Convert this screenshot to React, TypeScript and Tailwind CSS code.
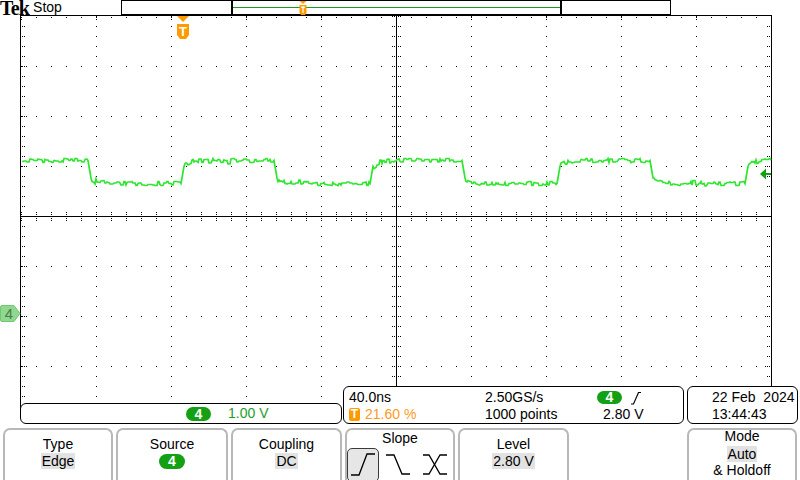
import React from "react";

function dotsPath(): string {
  const parts: string[] = [];
  const dot = (x: number, y: number) => parts.push(`M${x} ${y}h1v1h-1z`);
  const xs = Array.from({ length: 11 }, (_, i) => 21 + 75 * i);
  const ys = [66, 116, 166, 216, 266, 316, 366, 416];
  for (const y of ys) {
    if (y === 216) continue;
    for (let x = 21; x <= 771; x += 15) dot(x, y);
  }
  for (const x of xs) {
    if (x === 396 || x === 21 || x === 771) continue;
    for (let y = 16; y <= 416; y += 10) dot(x, y);
  }
  for (let x = 21; x <= 771; x += 15) {
    dot(x, 17);
    if ((x - 21) % 75 === 0) dot(x, 19);
  }
  for (let y = 26; y <= 416; y += 10) {
    dot(22, y);
    dot(24, y);
    dot(769, y);
    dot(767, y);
    if ((y - 16) % 50 === 0) {
      dot(26, y);
      dot(765, y);
    }
  }
  for (let x = 21; x <= 771; x += 15) {
    dot(x, 212);
    dot(x, 214);
    dot(x, 218);
    dot(x, 220);
  }
  for (let y = 16; y <= 416; y += 10) {
    dot(392, y);
    dot(394, y);
    dot(398, y);
    dot(400, y);
  }
  return parts.join("");
}

function wavePoints(): string {
  let s = 987654;
  const rnd = () => {
    s = (s * 16807) % 2147483647;
    return s / 2147483647;
  };
  const edges: [number, "r" | "f"][] = [
    [88, "f"],
    [181, "r"],
    [274, "f"],
    [370, "r"],
    [462, "f"],
    [557, "r"],
    [650, "f"],
    [745, "r"],
  ];
  const HIGH = 160.5;
  const LOW = 183.5;
  const pts: string[] = [];
  let noise = 0;
  let hold = 0;
  for (let x = 22; x <= 771; x++) {
    let last: [number, "r" | "f"] | null = null;
    for (const e of edges) if (e[0] <= x) last = e;
    let y = HIGH;
    let trans = false;
    if (last) {
      const d = x - last[0];
      const from = last[1] === "r" ? LOW : HIGH;
      const to = last[1] === "r" ? HIGH : LOW;
      if (d < 4) {
        y = from + (to - from) * (d / 4);
        trans = true;
      } else {
        y = to + (from - to) * 0.18 * Math.exp(-(d - 4) / 7);
      }
    }
    if (hold <= 0) {
      noise = (rnd() - 0.5) * 4.4;
      if (rnd() < 0.08) noise += (rnd() < 0.5 ? -1 : 1) * 2;
      hold = 1 + Math.floor(rnd() * 3);
    }
    hold--;
    const yy = trans ? y : y + noise;
    pts.push(`${x},${Math.round(yy * 2) / 2}`);
  }
  return pts.join(" ");
}

const DOTS = dotsPath();
const WAVE = wavePoints();

function Graticule() {
  return (
    <svg className="block" width={800} height={413} viewBox="0 15 800 413">
      <g shapeRendering="crispEdges" fill="#000">
        <path d={DOTS} />
        <rect x={20} y={15} width={752} height={1} />
        <rect x={20} y={15} width={1} height={402} />
        <rect x={771} y={15} width={1} height={402} />
        <rect x={21} y={216} width={750} height={1} />
        <rect x={396} y={15} width={1} height={402} />
      </g>
      <polyline
        points={WAVE}
        fill="none"
        stroke="#2fe62f"
        strokeWidth={1.7}
        strokeLinejoin="miter"
      />
      <polygon points="177,16 189,16 183,22" fill="#ff9a00" />
      <path d="M177 24H189V35L186 39H180L177 35Z" fill="#ff9a00" />
      <text
        x={183}
        y={36}
        textAnchor="middle"
        fontSize={13}
        fontWeight={700}
        fill="#fff"
        fontFamily="Liberation Sans, Arial, sans-serif"
      >
        T
      </text>
      <polygon points="760,174 766,168.5 766,179.5" fill="#13a013" />
      <rect x={765} y={173} width={6} height={2} fill="#13a013" />
      <path
        d="M2 305.5H14L20 313.5L14 321.5H2Q0.5 321.5 0.5 320V307Q0.5 305.5 2 305.5Z"
        fill="#8fd88f"
        stroke="#74c674"
        strokeWidth={1}
      />
      <text
        x={9}
        y={319}
        textAnchor="middle"
        fontSize={15}
        fill="#4d7a4d"
        fontFamily="Liberation Sans, Arial, sans-serif"
      >
        4
      </text>
    </svg>
  );
}

function TopBar() {
  return (
    <div className="flex h-[15px] items-start">
      <div className="flex h-[15px] w-[121px] items-start">
        <span className="font-['Liberation_Serif',serif] text-[20px] font-bold leading-[17px] tracking-[-0.8px]">
          Tek
        </span>
        <span className="ml-[4px] text-[14px] leading-[15px]">Stop</span>
      </div>
      <div className="relative flex h-[15px] w-[550px] border border-black">
        <div className="ml-[109px] flex h-full w-[331px] items-center border-x-2 border-black">
          <div className="h-[1px] w-full bg-[#1c9c1c]" />
        </div>
        <svg className="absolute left-[177px] top-0" width={8} height={15}>
          <polygon points="0.5,0 7.5,0 4,3" fill="#ff9a00" />
          <path d="M0.5 4H7.5V12L6 14H2L0.5 12Z" fill="#ff9a00" />
          <rect x={2} y={5.5} width={4} height={1.2} fill="#fff" />
          <rect x={3.4} y={5.5} width={1.2} height={6.5} fill="#fff" />
        </svg>
      </div>
    </div>
  );
}

function Pill({ cls }: { cls: string }) {
  return (
    <span
      className={`inline-flex items-center justify-center rounded-full bg-[#13a013] font-bold text-white ${cls}`}
    >
      4
    </span>
  );
}

function StatusRow() {
  return (
    <div className="absolute bottom-[4px] left-0 flex items-end">
      <div className="ml-[20px] flex h-[21px] w-[322px] items-center rounded-[6px] border border-black bg-white">
        <Pill cls="ml-[165px] h-[14px] w-[25px] text-[14px] leading-[14px]" />
        <span className="ml-[17px] text-[14px] leading-[19px] text-[#1e9e1e]">
          1.00 V
        </span>
      </div>
      <div className="ml-[1px] flex h-[38px] w-[341px] flex-col rounded-[6px] border border-black bg-white pl-[5px] pt-[2px] text-[14px] leading-[17px]">
        <div className="flex h-[17px] items-center">
          <span className="w-[136px]">40.0ns</span>
          <span className="w-[112px]">2.50GS/s</span>
          <Pill cls="h-[13px] w-[25px] text-[14px] leading-[13px]" />
          <svg className="ml-[8px]" width={12} height={14}>
            <polyline
              points="1,13 3.5,13 8.5,1.5 11,1.5"
              fill="none"
              stroke="#000"
              strokeWidth={1.2}
            />
          </svg>
        </div>
        <div className="flex h-[17px] items-center">
          <div className="flex w-[136px] items-center">
            <span className="flex h-[13px] w-[11px] items-center justify-center rounded-[2px] bg-[#ff9a00] text-[12px] font-bold leading-[13px] text-white">
              T
            </span>
            <span className="ml-[5px] text-[#ff9a1a]">21.60 %</span>
          </div>
          <span className="w-[112px]">1000 points</span>
          <span className="ml-[6px]">2.80 V</span>
        </div>
      </div>
      <div className="ml-[3px] flex h-[38px] w-[111px] flex-col rounded-[6px] border border-black bg-white pl-[24px] pt-[2px] text-[14px] leading-[17px]">
        <span className="whitespace-pre">22 Feb  2024</span>
        <span>13:44:43</span>
      </div>
    </div>
  );
}

function Btn({ cls, children }: { cls: string; children: React.ReactNode }) {
  return (
    <div
      className={`flex h-[56px] shrink-0 flex-col items-center rounded-t-[7px] border-2 border-b-0 border-[#b8b8b8] text-[14px] ${cls}`}
    >
      {children}
    </div>
  );
}

function Buttons() {
  return (
    <div className="flex h-[52px] items-start pl-[3px]">
      <Btn cls="w-[110px] pt-[5px]">
        <span className="leading-[18px]">Type</span>
        <span className="bg-[#e2e2e2] px-[1px] leading-[16px]">Edge</span>
      </Btn>
      <Btn cls="ml-[3px] w-[112px] pt-[5px]">
        <span className="leading-[18px]">Source</span>
        <Pill cls="mt-[1px] h-[15px] w-[26px] text-[14px] leading-[15px]" />
      </Btn>
      <Btn cls="ml-[3px] w-[111px] pt-[5px]">
        <span className="leading-[18px]">Coupling</span>
        <span className="bg-[#e2e2e2] px-[1px] leading-[16px]">DC</span>
      </Btn>
      <Btn cls="ml-[3px] w-[110px] items-stretch">
        <span className="self-center leading-[16px]">Slope</span>
        <div className="mt-[2px] flex items-start">
          <div className="h-[34px] w-[32px] rounded-[5px] border border-[#3a3a3a] bg-[#e6e6e6]">
            <svg width={30} height={32}>
              <polyline
                points="3,26 11,26 19,5 27,5"
                fill="none"
                stroke="#000"
                strokeWidth={1.3}
              />
            </svg>
          </div>
          <svg className="ml-[6px] mt-[1px]" width={28} height={30}>
            <polyline
              points="1,6 9,6 17,25 25,25"
              fill="none"
              stroke="#000"
              strokeWidth={1.3}
            />
          </svg>
          <svg className="ml-[9px] mt-[1px]" width={28} height={30}>
            <polyline
              points="1,6 7,6 18,25 25,25"
              fill="none"
              stroke="#000"
              strokeWidth={1.3}
            />
            <polyline
              points="1,25 7,25 18,6 25,6"
              fill="none"
              stroke="#000"
              strokeWidth={1.3}
            />
          </svg>
        </div>
      </Btn>
      <Btn cls="ml-[3px] w-[111px] pt-[5px]">
        <span className="leading-[18px]">Level</span>
        <span className="bg-[#e2e2e2] px-[1px] leading-[16px]">2.80 V</span>
      </Btn>
      <Btn cls="ml-[118px] w-[110px]">
        <span className="mt-[-3px] leading-[19px]">Mode</span>
        <span className="bg-[#e2e2e2] px-[1px] leading-[16px]">Auto</span>
        <span className="leading-[16px]">&amp; Holdoff</span>
      </Btn>
    </div>
  );
}

export default function App() {
  return (
    <div className="h-[480px] w-[800px] overflow-hidden bg-white font-['Liberation_Sans',Arial,sans-serif] text-[14px] text-black">
      <TopBar />
      <div className="relative h-[413px]">
        <Graticule />
        <StatusRow />
      </div>
      <Buttons />
    </div>
  );
}
